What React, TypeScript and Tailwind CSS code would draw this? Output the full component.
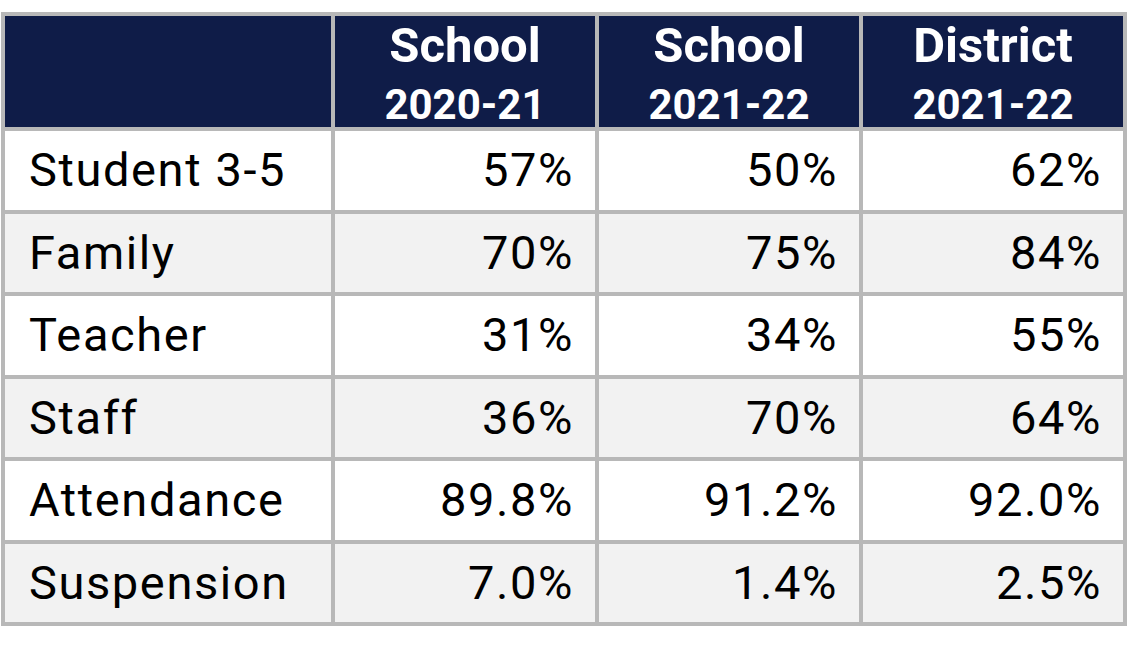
const ROWS: [string, string, string, string][] = [
  ["Student 3-5", "57%", "50%", "62%"],
  ["Family", "70%", "75%", "84%"],
  ["Teacher", "31%", "34%", "55%"],
  ["Staff", "36%", "70%", "64%"],
  ["Attendance", "89.8%", "91.2%", "92.0%"],
  ["Suspension", "7.0%", "1.4%", "2.5%"],
]

const HEADERS = [
  ["School", "2020-21"],
  ["School", "2021-22"],
  ["District", "2021-22"],
]

export default function App() {
  return (
    <div className="h-[645px] w-[1130px] bg-white pl-px pt-[12px] font-['Roboto',sans-serif]">
      <div className="grid w-[1126px] grid-cols-[326px_260px_260px_260px] grid-rows-[111px_repeat(6,78.5px)] gap-[4px] bg-[#b8b8b8] p-[4px]">
        <div className="bg-[#0f1c48]" />
        {HEADERS.map(([top, year], i) => (
          <div
            key={i}
            className="flex flex-col items-center bg-[#0f1c48] pt-[5px] font-bold text-white"
          >
            <span className="text-[49px] leading-[50px]">{top}</span>
            <span className="mt-[14px] text-[42px] leading-[40px]">{year}</span>
          </div>
        ))}
        {ROWS.map((row, r) => {
          const bg = r % 2 === 1 ? "bg-[#f2f2f2]" : "bg-white"
          return row.map((cell, c) => (
            <div
              key={`${r}-${c}`}
              className={`${bg} flex items-center text-[47px] tracking-[1.6px] text-black ${
                c === 0 ? "justify-start pl-[24px]" : "justify-end pr-[21px]"
              }`}
            >
              {cell}
            </div>
          ))
        })}
      </div>
    </div>
  )
}
